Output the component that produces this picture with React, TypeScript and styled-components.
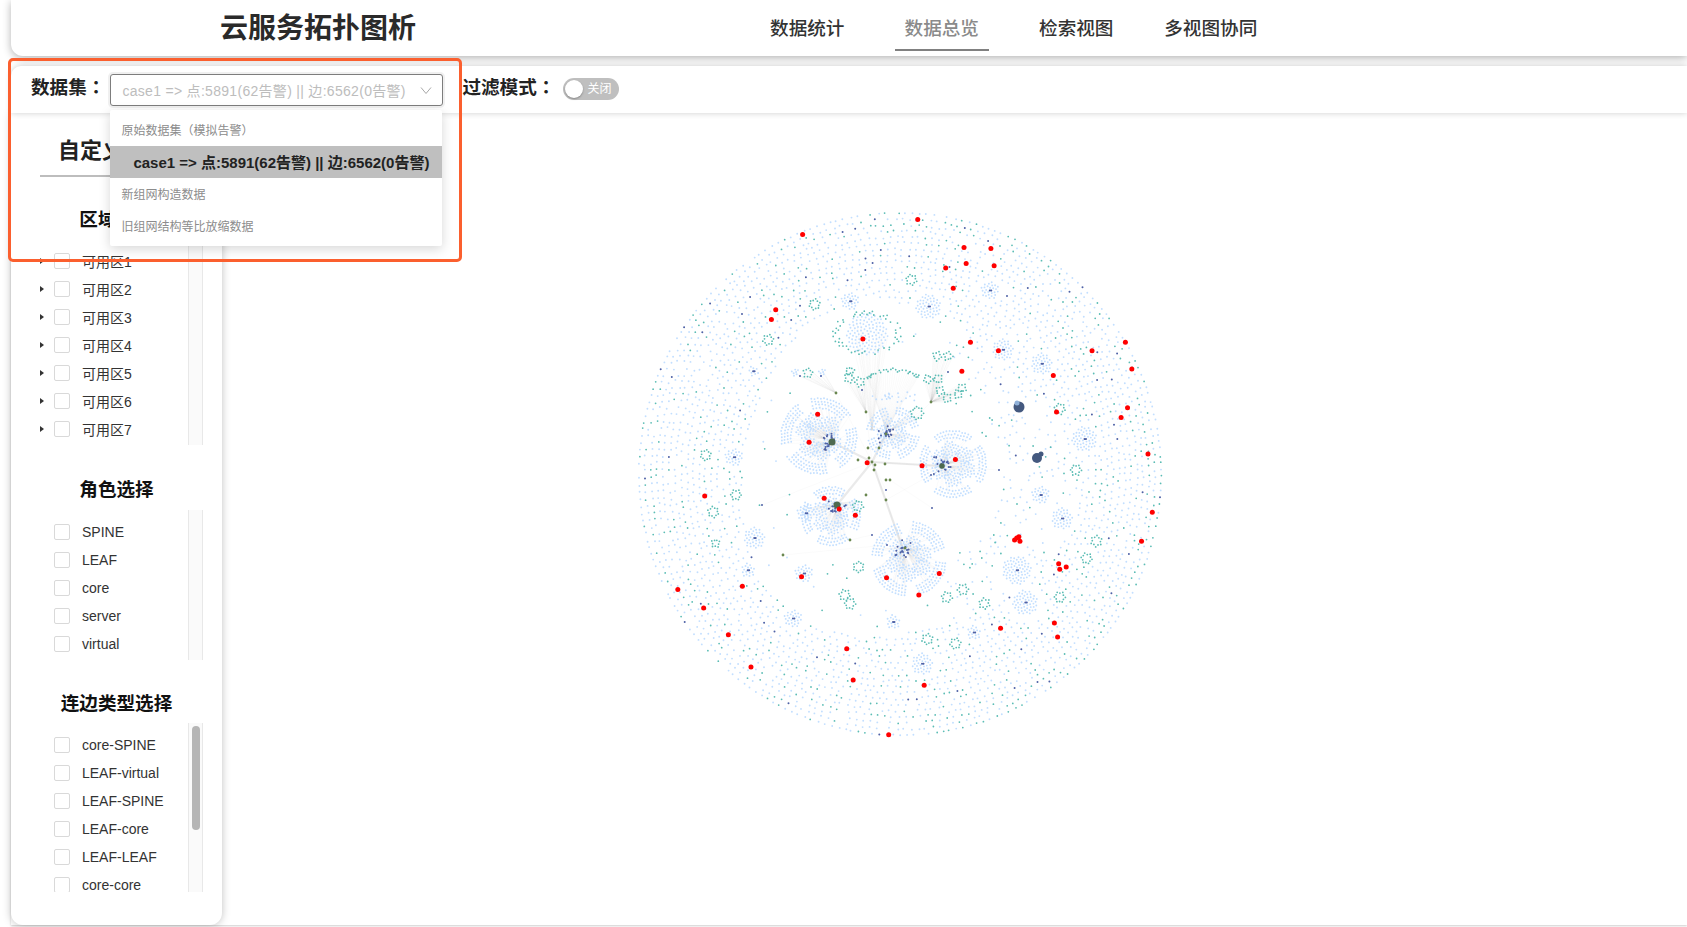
import React, { useMemo } from "react";
import styled, { createGlobalStyle } from "styled-components";

const GlobalStyle = createGlobalStyle`
  html, body { margin: 0; padding: 0; background: #fff; }
  body { font-family: "Liberation Sans", "Noto Sans CJK SC", sans-serif; color: #333; overflow: hidden; }
  * { box-sizing: border-box; }
`;

const Page = styled.div`
  position: relative;
  width: 1687px;
  height: 927px;
  overflow: hidden;
  background: #fff;
`;
const Header = styled.header`
  display: flex;
  align-items: center;
  height: 56px;
  margin-left: 11px;
  background: #fff;
  border-radius: 0 0 0 12px;
  box-shadow: 0 2px 8px rgba(0, 0, 0, 0.3);
  position: relative;
  z-index: 3;
`;
const Title = styled.h1`
  margin: 0 0 0 209px;
  font-size: 28px;
  line-height: 58px;
  height: 56px;
  font-weight: 700;
  color: #2a2a2a;
  white-space: nowrap;
`;
const Tabs = styled.nav`
  display: flex;
  margin-left: 324px;
  height: 56px;
`;
const Tab = styled.div`
  width: 134.5px;
  display: flex;
  justify-content: center;
`;
const TabLabel = styled.span<{ $active?: boolean }>`
  display: block;
  width: 94px;
  height: 51px;
  padding-top: 13px;
  text-align: center;
  font-family: "Noto Sans CJK SC", sans-serif;
  font-size: 18.6px;
  line-height: 28px;
  font-weight: 500;
  white-space: nowrap;
  color: ${(p) => (p.$active ? "#8a8a8a" : "#333")};
  border-bottom: 2px solid ${(p) => (p.$active ? "#808080" : "transparent")};
`;
const Toolbar = styled.div`
  display: flex;
  align-items: center;
  height: 47px;
  margin: 10px 0 0 11px;
  padding: 0 0 2px 20px;
  background: #fff;
  box-shadow: 0 0 6px rgba(0, 0, 0, 0.2);
  position: relative;
  z-index: 4;
  border-radius: 10px 0 0 0;
`;
const FieldLabel = styled.span`
  font-family: "Liberation Sans", "Noto Sans CJK TC", sans-serif;
  font-size: 18.6px;
  line-height: 26px;
  margin-top: -2px;
  font-weight: 700;
  color: #222;
  white-space: nowrap;
`;
const SelectBox = styled.div`
  position: relative;
  width: 333px;
  height: 32px;
  margin-left: 5px;
  margin-top: 2px;
  padding: 0 10px 0 11px;
  display: flex;
  align-items: center;
  justify-content: space-between;
  border: 1px solid #7d7d7d;
  border-radius: 3px;
  background: #fff;
  box-shadow: 0 0 0 2px rgba(128, 128, 128, 0.12);
  font-size: 14px;
  letter-spacing: 0.3px;
  color: #bdbdbd;
  white-space: nowrap;
`;
const Dropdown = styled.div`
  position: absolute;
  left: -1px;
  top: 35px;
  width: 332px;
  height: 136px;
  padding: 4px 0;
  background: #fff;
  border-radius: 2px;
  box-shadow: 0 3px 12px rgba(0, 0, 0, 0.16);
  letter-spacing: 0;
`;
const GroupLabel = styled.div`
  height: 32px;
  padding-left: 11px;
  display: flex;
  align-items: center;
  font-size: 12px;
  color: #8c8c8c;
`;
const OptionRow = styled.div`
  height: 32px;
  padding-left: 23px;
  display: flex;
  align-items: center;
  background: #bfbfbf;
  color: #222;
  font-size: 15px;
  font-weight: 700;
`;
const FilterLabel = styled(FieldLabel)`
  margin-left: 19px;
`;
const Switch = styled.div`
  position: relative;
  width: 56px;
  height: 22px;
  margin-left: 8px;
  padding-left: 24px;
  border-radius: 11px;
  background: #bfbfbf;
  color: #fff;
  font-size: 12px;
  line-height: 22px;
`;
const Knob = styled.span`
  position: absolute;
  left: 2px;
  top: 2px;
  width: 18px;
  height: 18px;
  border-radius: 50%;
  background: #fff;
  box-shadow: 0 1px 2px rgba(0, 0, 0, 0.3);
`;
const Body = styled.div`
  display: flex;
  height: 812px;
  margin-left: 11px;
  box-shadow: 0 1px 2px rgba(0, 0, 0, 0.2);
`;
const Sidebar = styled.aside`
  width: 211px;
  height: 812px;
  background: #fff;
  border-radius: 0 0 12px 12px;
  box-shadow: 0 0 9px rgba(0, 0, 0, 0.25);
  position: relative;
  z-index: 2;
  overflow: hidden;
`;
const SideTitle = styled.h2`
  margin: 0 0 27px 29px;
  width: 150px;
  height: 64px;
  padding: 19px 4px 0 0;
  text-align: center;
  font-size: 22px;
  line-height: 38px;
  font-weight: 700;
  color: #222;
  border-bottom: 2px solid #bdbdbd;
`;
const SectionTitle = styled.h3<{ $top: number; $bottom: number }>`
  margin: ${(p) => p.$top}px 0 ${(p) => p.$bottom}px 0;
  height: 32px;
  width: 211px;
  text-align: center;
  font-size: 18.6px;
  line-height: 32px;
  font-weight: 700;
  color: #111;
  white-space: nowrap;
`;
const ListWrap = styled.div<{ $h: number }>`
  position: relative;
  margin-left: 27px;
  width: 165px;
  height: ${(p) => p.$h}px;
  padding-top: 8px;
  overflow: hidden;
`;
const Track = styled.div`
  position: absolute;
  right: 0;
  top: 0;
  bottom: 0;
  width: 15px;
  background: #fafafa;
  border-left: 1px solid #e8e8e8;
  border-right: 1px solid #e8e8e8;
`;
const Thumb = styled.div`
  position: absolute;
  left: 3px;
  top: 3px;
  width: 8px;
  height: 104px;
  border-radius: 4px;
  background: #b5b5b5;
`;
const Row = styled.div`
  display: flex;
  align-items: center;
  height: 28px;
`;
const CaretSlot = styled.span`
  width: 16px;
  height: 28px;
  display: flex;
  align-items: center;
  padding-left: 2px;
`;
const Caret = styled.span`
  width: 0;
  height: 0;
  border-left: 4px solid #333;
  border-top: 3.5px solid transparent;
  border-bottom: 3.5px solid transparent;
`;
const Check = styled.span`
  width: 16px;
  height: 16px;
  border: 1px solid #d9d9d9;
  border-radius: 2px;
  background: #fff;
  flex: none;
`;
const RowLabel = styled.span`
  margin-left: 12px;
  font-size: 14px;
  color: #333;
  white-space: nowrap;
`;
const Canvas = styled.main`
  flex: 1;
  min-width: 0;
  background: #fff;
`;
const GraphSvg = styled.svg`
  display: block;
`;
const Annotation = styled.div`
  position: absolute;
  left: 8px;
  top: 58px;
  width: 454px;
  height: 204px;
  border: 3px solid #fb5f2e;
  border-radius: 5px;
  pointer-events: none;
  z-index: 9;
`;

function rng(seed: number) {
  return () => {
    seed |= 0;
    seed = (seed + 0x6d2b79f5) | 0;
    let t = Math.imul(seed ^ (seed >>> 15), 1 | seed);
    t = (t + Math.imul(t ^ (t >>> 7), 61 | t)) ^ t;
    return ((t ^ (t >>> 14)) >>> 0) / 4294967296;
  };
}

const K = 1687 / 1568;
const RED: [number, number][] = [
  [853, 204], [746, 218], [896, 230], [921, 231], [879, 249], [898, 245], [924, 247], [886, 268],
  [721, 288], [717, 297], [802, 315], [902, 318], [928, 326], [1015, 326], [1046, 318], [1052, 343],
  [979, 349], [894, 345], [982, 383], [1048, 379], [1042, 388], [760, 385], [752, 411], [806, 430],
  [857, 433], [888, 427], [1067, 422], [655, 461], [766, 463], [780, 473], [795, 479], [1071, 476],
  [1061, 503], [984, 524], [991, 527], [985, 529], [824, 537], [873, 533], [745, 536], [854, 553],
  [630, 548], [690, 545], [654, 565], [677, 590], [980, 579], [930, 584], [983, 592], [787, 603],
  [698, 620], [793, 632], [859, 637], [826, 683], [945, 500], [948, 503], [943, 502], [947, 499],
];
const BLUE_BALLS: [number, number, number][] = [
  [790, 280, 5], [863, 285, 7], [920, 270, 5], [932, 325, 6], [968, 338, 6],
  [1008, 408, 7], [682, 425, 5], [701, 500, 6], [695, 530, 4], [737, 575, 5], [747, 533, 5],
  [953, 560, 7], [945, 530, 8], [967, 460, 5], [987, 482, 6], [905, 588, 4], [857, 617, 6],
  [700, 345, 3], [749, 477, 5], [830, 578, 4],
];
const TEAL_RINGS: [number, number, number][] = [
  [757, 283, 4], [714, 316, 4], [847, 260, 4], [985, 380, 4], [1000, 437, 4], [656, 423, 4],
  [684, 460, 4], [663, 476, 4], [915, 561, 4], [1019, 503, 4], [1010, 519, 4], [985, 555, 4],
  [888, 598, 4], [862, 594, 4], [785, 553, 4], [798, 527, 4], [790, 345, 3], [665, 505, 3],
  [880, 555, 4], [895, 548, 4], [790, 561, 4],
];
// hub x, hub y, flower x, flower y, flower radius
const FLOWERS: [number, number, number, number, number][] = [
  [832, 442, 819, 436, 36],
  [942, 466, 953, 464, 34],
  [837, 505, 831, 516, 29],
  [903, 548, 909, 559, 35],
  [886, 434, 893, 433, 25],
];
const CX = 900;
const CY = 474;

function buildGraph() {
  const r = rng(20240);
  const blue: string[] = [];
  const teal: string[] = [];
  const navy: string[] = [];
  const olive: string[] = [];
  const lines: string[] = [];
  const dot = (bag: string[], x: number, y: number) => bag.push(`M${x.toFixed(1)} ${y.toFixed(1)}h0`);
  const line = (x1: number, y1: number, x2: number, y2: number) =>
    lines.push(`M${x1.toFixed(1)} ${y1.toFixed(1)}L${x2.toFixed(1)} ${y2.toFixed(1)}`);
  const GOLD = Math.PI * (3 - Math.sqrt(5));

  const blob = (bag: string[], x: number, y: number, R: number, step: number, hub?: [number, number], chance = 0.7) => {
    const n = Math.max(4, Math.floor(((R * R) / (step * step)) * 3));
    for (let i = 0; i < n; i++) {
      const q = R * Math.sqrt((i + 0.5) / n);
      const a = i * GOLD;
      const px = x + Math.cos(a) * q;
      const py = y + Math.sin(a) * q;
      dot(bag, px, py);
      if (hub && r() < chance) line(hub[0], hub[1], px, py);
    }
  };
  const tealRing = (x: number, y: number, s: number, hub?: [number, number]) => {
    const n = Math.max(9, Math.floor(s * 3));
    const off = r() * 6;
    for (let i = 0; i < n; i++) {
      const a = off + (i / n) * Math.PI * 2;
      const q = s + 0.6 + (i % 2 ? 0.9 : -0.5) + (r() - 0.5) * 0.6;
      const px = x + Math.cos(a) * q;
      const py = y + Math.sin(a) * q;
      dot(teal, px, py);
      if (hub) line(hub[0], hub[1], px, py);
    }
  };

  const zones: [number, number, number][] = [
    ...FLOWERS.map(([, , x, y, R]) => [x, y, R + 8] as [number, number, number]),
    [867, 333, 36],
    [895, 372, 28],
    [940, 380, 26],
    ...BLUE_BALLS.map(([x, y, s]) => [x * K, y * K, s * 1.8 + 4] as [number, number, number]),
    ...TEAL_RINGS.map(([x, y, s]) => [x * K, y * K, s + 5] as [number, number, number]),
  ];
  const blocked = (x: number, y: number) => zones.some(([a, b, c]) => Math.hypot(x - a, y - b) < c);

  for (let rad = 261; rad > 100; rad -= 6) {
    const n = Math.floor((2 * Math.PI * rad) / 7);
    const off = r() * 6;
    const jit = rad > 255 ? 0.8 : 2.2;
    for (let i = 0; i < n; i++) {
      const a = off + (i / n) * Math.PI * 2 + ((r() - 0.5) * 3) / rad;
      const right = Math.cos(a) > 0.35;
      const inner = rad < 165 + Math.sin(a * 3 + 1) * 10;
      if (inner && !right) continue;
      if (inner && r() > 0.42) continue;
      if (r() < 0.08) continue;
      const rr = rad + (r() - 0.5) * jit;
      const x = CX + Math.cos(a) * rr;
      const y = CY + Math.sin(a) * rr;
      if (blocked(x, y)) continue;
      const c = r();
      const edge = rad > 248 && Math.cos(a) > -0.2 ? 0.22 : 0;
      if (c < 0.028) dot(navy, x, y);
      else if (c < 0.19 + edge) dot(teal, x, y);
      else dot(blue, x, y);
    }
  }

  FLOWERS.forEach(([hx, hy, cx, cy, R]) => {
    const lobes = 6;
    const start = r() * 6;
    for (let l = 0; l < lobes; l++) {
      const a = start + (l / lobes) * Math.PI * 2 + (r() - 0.5) * 0.3;
      const d = R * 0.42;
      const lr = R * 0.27;
      const px = cx + Math.cos(a) * d;
      const py = cy + Math.sin(a) * d;
      const sx = hx + (px - hx) * 0.28;
      const sy = hy + (py - hy) * 0.28;
      dot(navy, sx, sy);
      dot(navy, sx + r() * 4 - 2, sy + r() * 4 - 2);
      blob(blue, px, py, lr, 2.9, [sx, sy]);
    }
    for (let q = R * 0.78; q <= R + 2; q += 3.2) {
      const arcs = 4;
      for (let s = 0; s < arcs; s++) {
        const base = start + (s / arcs) * Math.PI * 2;
        for (let t = 0; t < 1.2; t += 3.2 / q) {
          const x = cx + Math.cos(base + t) * (q + (r() - 0.5) * 1.2);
          const y = cy + Math.sin(base + t) * (q + (r() - 0.5) * 1.2);
          dot(blue, x, y);
          if (r() < 0.3) line(hx, hy, x, y);
        }
      }
    }
    for (let i = 0; i < 8; i++) dot(navy, hx + (r() - 0.5) * 18, hy + (r() - 0.5) * 18);
  });

  for (let i = 0; i < 80; i++) {
    const a = (i / 80) * Math.PI * 2;
    const k = 1 + (i % 3) * 0.09;
    const x = 867 + Math.cos(a) * 29 * k;
    const y = 333 + Math.sin(a) * 18.5 * k;
    if (r() < 0.62) dot(teal, x, y);
  }
  blob(blue, 867, 334, 21, 3.4, [872, 430], 0.2);

  const topHub: [number, number] = [931, 402];
  [[937, 356], [948, 356], [928, 379], [938, 379], [940, 391], [958, 394], [947, 398], [962, 388]].forEach(([x, y]) =>
    tealRing(x, y, 3.2, topHub)
  );
  for (let i = 0; i < 30; i++) {
    const a = Math.PI + (i / 30) * Math.PI;
    const x = 893 + Math.cos(a) * 25;
    const y = 378 + Math.sin(a) * 8;
    dot(teal, x + (r() - 0.5) * 3, y + (r() - 0.5) * 4);
    line(886, 430, x, y);
  }
  for (let i = 0; i < 22; i++) {
    dot(blue, 872 + r() * 44, 392 + r() * 10);
  }
  tealRing(808, 373, 3.4, [836, 393]);
  tealRing(860, 382, 3.4, [866, 412]);
  tealRing(849, 378, 3.4, [866, 412]);
  tealRing(917, 413, 5, [890, 430]);
  blob(blue, 795, 372, 4, 2.6, [836, 393]);
  blob(blue, 822, 372, 4, 2.6, [836, 393]);
  blob(blue, 806, 513, 4, 2.4, [828, 505]);
  tealRing(858, 506, 4, [838, 503]);

  BLUE_BALLS.forEach(([sx, sy, s]) => {
    const x0 = sx * K;
    const y0 = sy * K;
    blob(blue, x0, y0, s * 1.8, 3);
    dot(navy, x0, y0);
    dot(navy, x0 + 1.5, y0);
  });
  TEAL_RINGS.forEach(([sx, sy, s]) => tealRing(sx * K, sy * K, s));

  for (let i = 0; i < 70; i++) {
    const a = r() * Math.PI * 2;
    const q = 90 + r() * 70;
    const x = CX + Math.cos(a) * q;
    const y = CY + Math.sin(a) * q;
    if (blocked(x, y)) continue;
    dot(r() < 0.6 ? teal : blue, x, y);
  }

  const fans: [number, number, number, number][] = [
    [836, 393, 821, 376], [836, 393, 800, 376], [866, 412, 862, 390], [931, 402, 948, 372],
    [872, 462, 836, 393], [872, 462, 931, 402], [872, 462, 866, 412], [872, 462, 886, 490],
    [886, 500, 903, 552], [872, 462, 886, 500], [872, 462, 762, 505], [872, 462, 999, 470],
    [886, 500, 931, 475], [890, 480, 932, 508], [783, 555, 887, 545], [850, 540, 872, 535],
  ];
  fans.forEach(([a, b, c, d]) => {
    line(a, b, c, d);
    dot(olive, a, b);
    dot(navy, c, d);
  });
  [[872, 462], [869, 458], [875, 465], [886, 434], [858, 460], [868, 448], [879, 448], [885, 464], [874, 470], [886, 480], [866, 495], [905, 548]].forEach(
    ([x, y]) => dot(olive, x, y)
  );
  return { blue: blue.join(""), teal: teal.join(""), navy: navy.join(""), olive: olive.join(""), lines: lines.join("") };
}

const Graph: React.FC = () => {
  const g = useMemo(buildGraph, []);
  return (
    <GraphSvg width={1465} height={812} viewBox="222 113 1465 812" aria-label="topology graph">
      <g fill="none" strokeLinecap="round">
        <path d={g.lines} stroke="#8b8b8b" strokeOpacity={0.05} strokeWidth={0.7} />
        <path d="M872 462L832 442M872 462L942 466M872 462L837 505M872 462L904 552M872 462L886 434" stroke="#8a8a8a" strokeOpacity={0.18} strokeWidth={2.2} />
        <path d={g.blue} stroke="#c3dfff" strokeWidth={1.9} />
        <path d={g.teal} stroke="#5cbdb5" strokeWidth={1.8} />
        <path d={g.navy} stroke="#4f62a6" strokeWidth={2} />
        <path d={g.olive} stroke="#6a8750" strokeWidth={2.8} />
      </g>
      <circle cx={1019} cy={407} r={5.5} fill="#44597f" />
      <circle cx={1017} cy={403} r={2.5} fill="#8fb0d8" />
      <circle cx={1037} cy={458} r={5} fill="#44597f" />
      <circle cx={1041} cy={454} r={2.5} fill="#44597f" />
      <circle cx={832} cy={442} r={3.5} fill="#4e6a50" />
      <circle cx={942} cy={466} r={2.8} fill="#4e6a50" />
      <circle cx={837} cy={505} r={3.5} fill="#4e6a50" />
      {RED.map(([x, y], i) => (
        <circle key={i} cx={x * K} cy={y * K} r={2.5} fill="#ff0000" />
      ))}
    </GraphSvg>
  );
};

const zones = ["可用区1", "可用区2", "可用区3", "可用区4", "可用区5", "可用区6", "可用区7"];
const roles = ["SPINE", "LEAF", "core", "server", "virtual"];
const edges = ["core-SPINE", "LEAF-virtual", "LEAF-SPINE", "LEAF-core", "LEAF-LEAF", "core-core"];

const App: React.FC = () => (
  <Page>
    <GlobalStyle />
    <Header>
      <Title>云服务拓扑图析</Title>
      <Tabs>
        <Tab><TabLabel>数据统计</TabLabel></Tab>
        <Tab><TabLabel $active>数据总览</TabLabel></Tab>
        <Tab><TabLabel>检索视图</TabLabel></Tab>
        <Tab><TabLabel>多视图协同</TabLabel></Tab>
      </Tabs>
    </Header>
    <Toolbar>
      <FieldLabel>数据集：</FieldLabel>
      <SelectBox>
        <span>case1 =&gt; 点:5891(62告警) || 边:6562(0告警)</span>
        <svg width="12" height="12" viewBox="0 0 12 12" fill="none" stroke="#a8a8a8" strokeWidth="1">
          <path d="M1 3.5l5 6 5-6" />
        </svg>
        <Dropdown>
          <GroupLabel>原始数据集（模拟告警）</GroupLabel>
          <OptionRow>case1 =&gt; 点:5891(62告警) || 边:6562(0告警)</OptionRow>
          <GroupLabel>新组网构造数据</GroupLabel>
          <GroupLabel>旧组网结构等比放缩数据</GroupLabel>
        </Dropdown>
      </SelectBox>
      <FilterLabel>过滤模式：</FilterLabel>
      <Switch>
        <Knob />
        关闭
      </Switch>
    </Toolbar>
    <Body>
      <Sidebar>
        <SideTitle>自定义筛选</SideTitle>
        <SectionTitle $top={0} $bottom={3}>区域选择</SectionTitle>
        <ListWrap $h={206}>
          <Track />
          {zones.map((z) => (
            <Row key={z}>
              <CaretSlot><Caret /></CaretSlot>
              <Check />
              <RowLabel>{z}</RowLabel>
            </Row>
          ))}
        </ListWrap>
        <SectionTitle $top={29} $bottom={4}>角色选择</SectionTitle>
        <ListWrap $h={150}>
          <Track />
          {roles.map((z) => (
            <Row key={z}>
              <CaretSlot />
              <Check />
              <RowLabel>{z}</RowLabel>
            </Row>
          ))}
        </ListWrap>
        <SectionTitle $top={28} $bottom={3}>连边类型选择</SectionTitle>
        <ListWrap $h={169}>
          <Track><Thumb /></Track>
          {edges.map((z) => (
            <Row key={z}>
              <CaretSlot />
              <Check />
              <RowLabel>{z}</RowLabel>
            </Row>
          ))}
        </ListWrap>
      </Sidebar>
      <Canvas>
        <Graph />
      </Canvas>
    </Body>
    <Annotation />
  </Page>
);

export default App;
